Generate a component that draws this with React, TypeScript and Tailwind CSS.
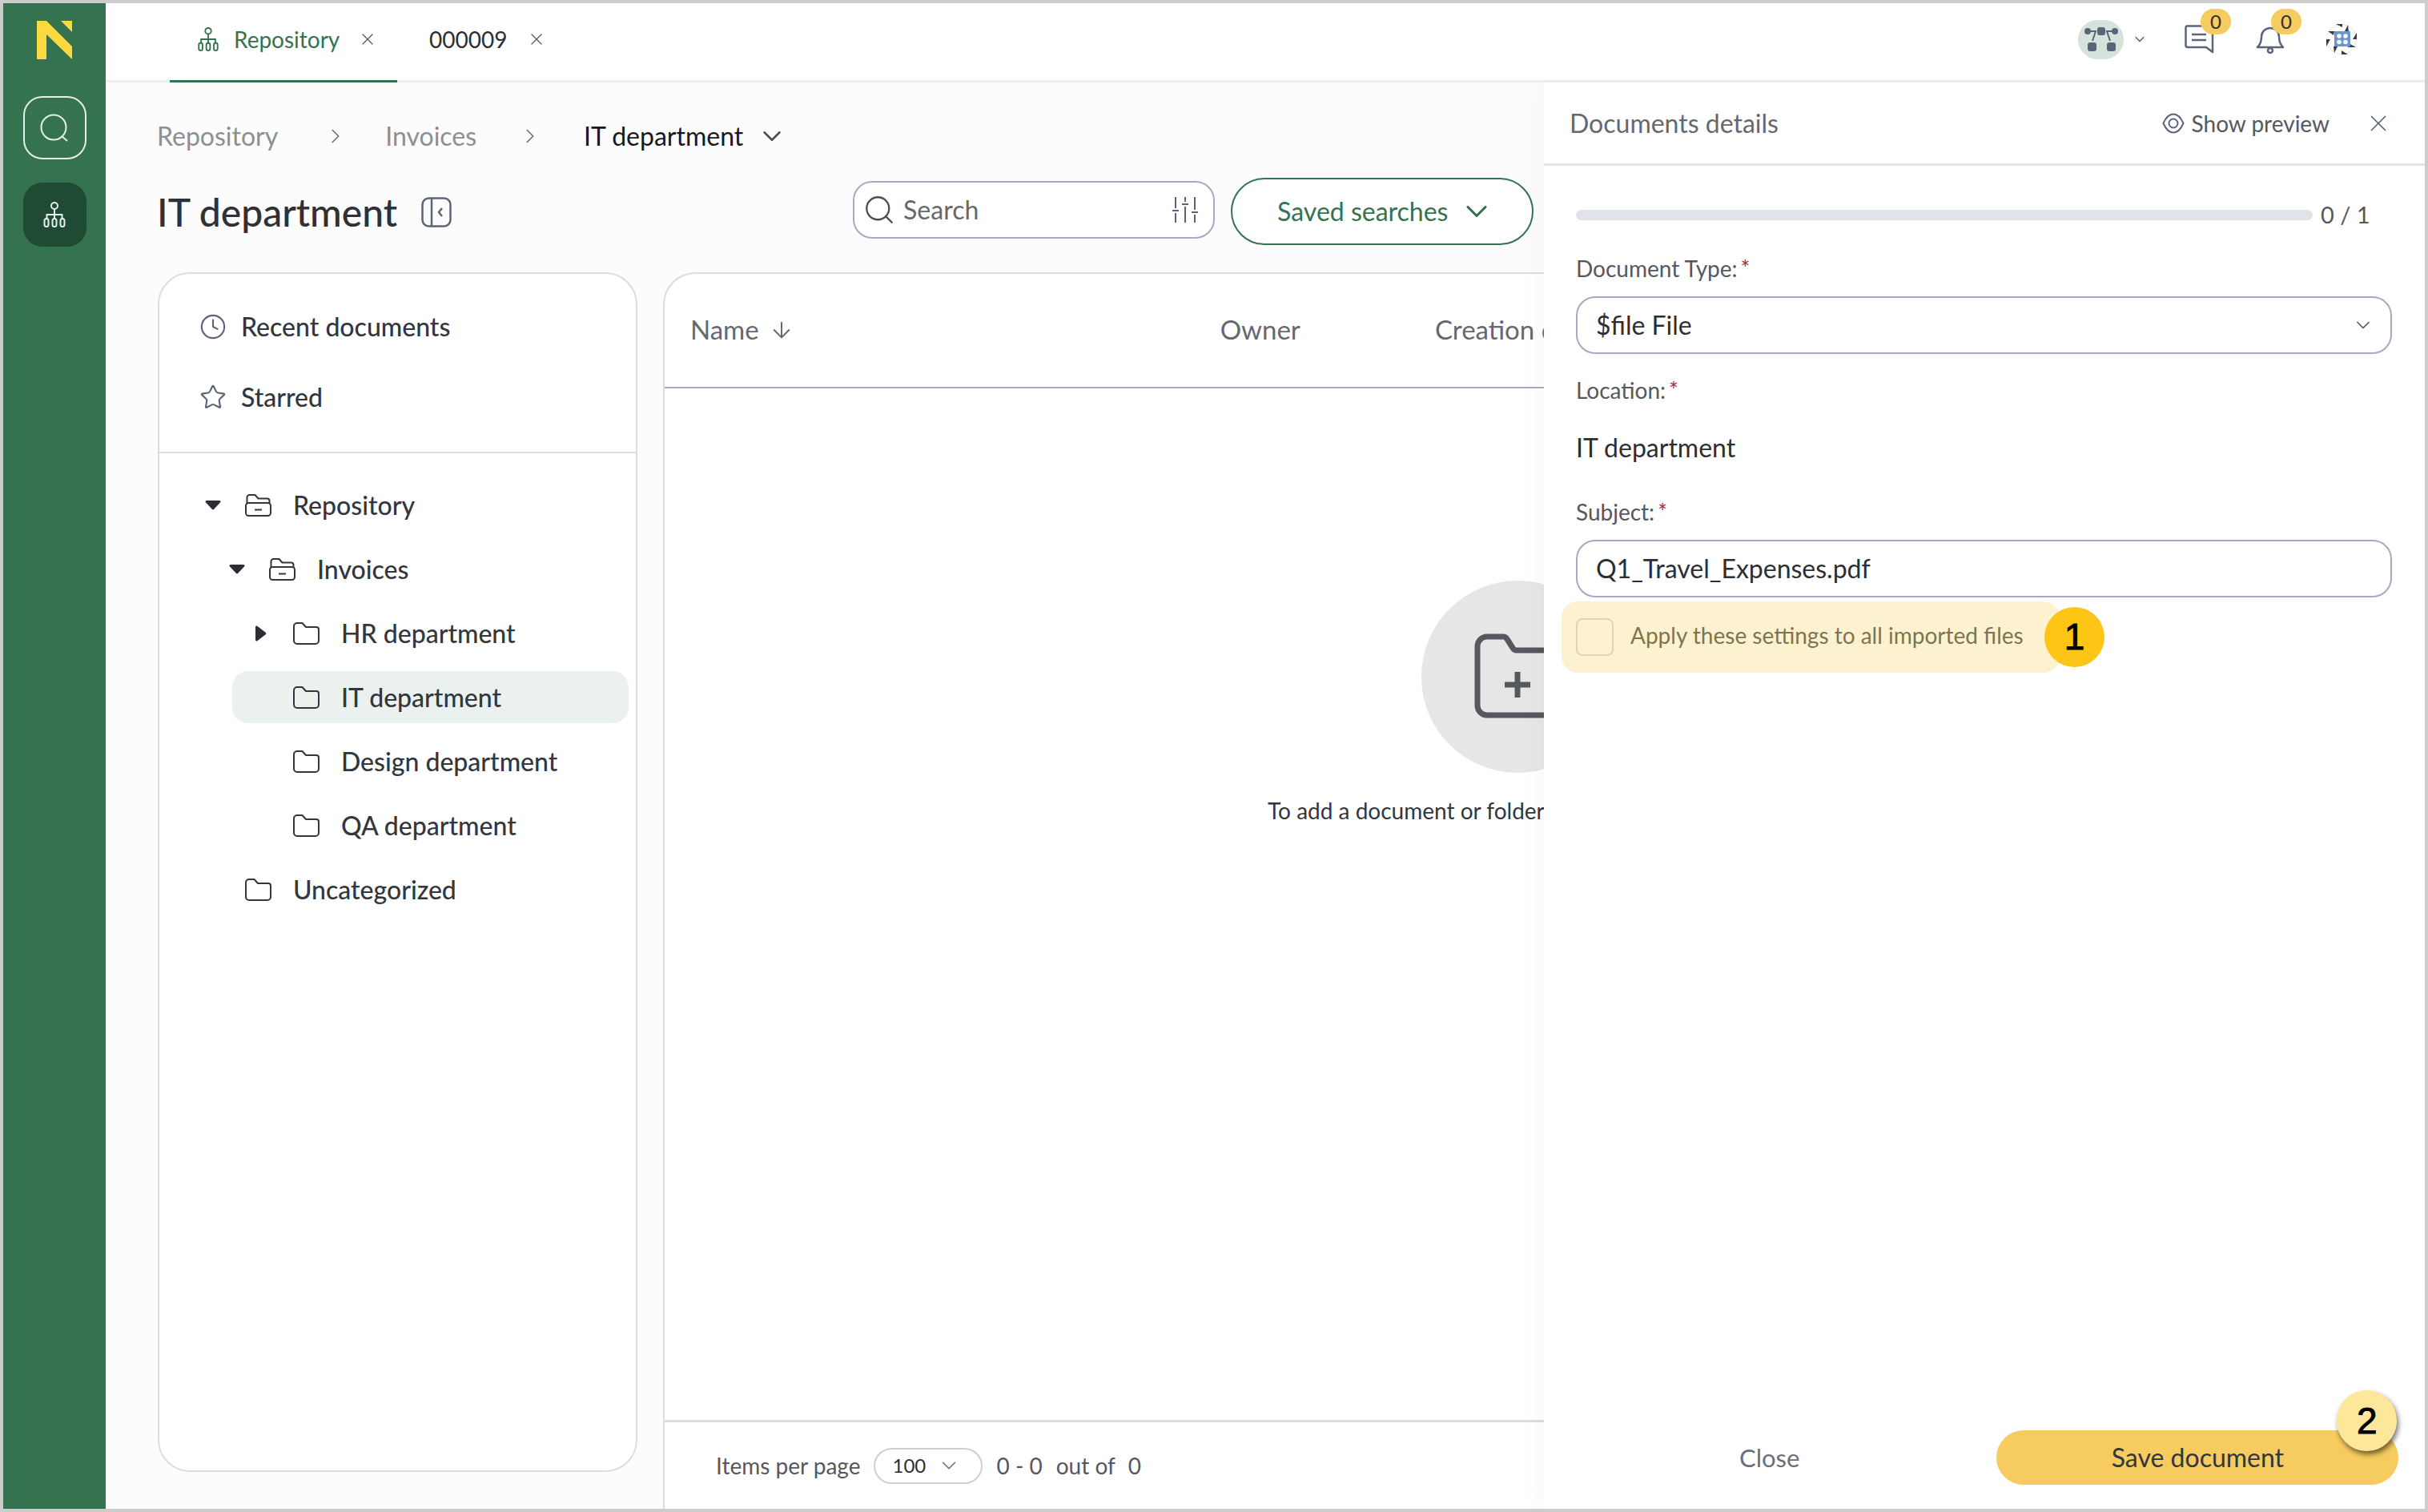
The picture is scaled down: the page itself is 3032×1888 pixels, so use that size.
import React from 'react';
import { ChevronDown, ChevronRight, Clock, Star, X, ArrowDown, Search } from 'lucide-react';

function TreeIcon({ className }: { className?: string }) {
  return (
    <svg viewBox="0 0 28 32" fill="none" stroke="currentColor" strokeWidth="2" className={className}>
      <circle cx="14" cy="5" r="4" />
      <path d="M14 9v7M4.5 21v-5h19v5M14 16v5" />
      <rect x="1.5" y="21" width="5" height="10" rx="2.5" />
      <rect x="11.5" y="21" width="5" height="10" rx="2.5" />
      <rect x="21.5" y="21" width="5" height="10" rx="2.5" />
    </svg>
  );
}

function Folder({ open }: { open?: boolean }) {
  return (
    <svg viewBox="0 0 33 28" fill="none" stroke="#33363d" strokeWidth="2" strokeLinejoin="round" className="h-[28px] w-[33px] shrink-0">
      {open ? (
        <>
          <path d="M2.5 12V4a3 3 0 0 1 3-3h7l4 4.5h11a3 3 0 0 1 3 3V12" />
          <rect x="1" y="11" width="31" height="16" rx="3.5" />
          <path d="M12 19.500h9" />
        </>
      ) : (
        <path d="M1 5a4 4 0 0 1 4-4h6.500l4.500 5h13a3 3 0 0 1 3 3v14a4 4 0 0 1-4 4H5a4 4 0 0 1-4-4z" />
      )}
    </svg>
  );
}

function Caret({ open }: { open: boolean }) {
  return open ? (
    <svg viewBox="0 0 20 12" className="h-[12px] w-[20px] shrink-0" fill="#2c2e33">
      <path d="M2 0h16a1.500 1.500 0 0 1 1 2.600L11 11a1.500 1.500 0 0 1-2 0L1 2.600A1.500 1.500 0 0 1 2 0z" />
    </svg>
  ) : (
    <svg viewBox="0 0 14 20" className="h-[20px] w-[14px] shrink-0" fill="#2c2e33">
      <path d="M0 2a1.500 1.500 0 0 1 2.600-1L13 9a1.500 1.500 0 0 1 0 2L2.600 19A1.500 1.500 0 0 1 0 18z" />
    </svg>
  );
}

const treeRows = [
  { label: 'Repository', caretLeft: 57, folderLeft: 107, open: true, caret: true },
  { label: 'Invoices', caretLeft: 87, folderLeft: 137, open: true, caret: true },
  { label: 'HR department', caretLeft: 120, folderLeft: 167, open: false, caret: true },
  { label: 'IT department', caretLeft: 0, folderLeft: 167, open: false, caret: false, selected: true },
  { label: 'Design department', caretLeft: 0, folderLeft: 167, open: false, caret: false },
  { label: 'QA department', caretLeft: 0, folderLeft: 167, open: false, caret: false },
  { label: 'Uncategorized', caretLeft: 0, folderLeft: 107, open: false, caret: false },
];

function Required({ children }: { children: React.ReactNode }) {
  return (
    <div className="text-[28px] leading-[36px] text-[#55585f]">
      {children}
      <span className="relative ml-[4px] text-[#a8323a]">*</span>
    </div>
  );
}

export default function App() {
  return (
    <div
      className="relative flex h-[1888px] w-[3032px] overflow-hidden border-4 border-[#cccccc] bg-[#fcfcfc] text-[#33363d]"
      style={{ fontFamily: 'Lato, sans-serif' }}
    >
      {/* Green rail */}
      <aside className="flex w-[128px] shrink-0 flex-col items-center bg-[#35724f] pt-[22px]">
        <svg viewBox="0 0 44 48" className="h-[48px] w-[44px]" fill="#fdd83f">
          <path d="M0 0h12l32 32v16L12 17v31H0z" />
          <path d="M30 0h14v14z" />
        </svg>
        <button className="mt-[46px] flex h-[79px] w-[79px] items-center justify-center rounded-[24px] border-2 border-[#e4efe9] text-[#e4efe9]">
          <svg viewBox="0 0 36 36" fill="none" stroke="currentColor" strokeWidth="2" className="h-[36px] w-[36px]">
            <circle cx="17" cy="17" r="15.500" />
            <path d="M27 28l7 6" />
          </svg>
        </button>
        <button className="mt-[29px] flex h-[80px] w-[79px] items-center justify-center rounded-[24px] bg-[#1f4a33] text-[#e4efe9]">
          <TreeIcon className="h-[32px] w-[34px]" />
        </button>
      </aside>

      <div className="flex min-w-0 flex-1 flex-col">
        {/* Top tabs */}
        <header className="flex h-[99px] shrink-0 items-center border-b-[3px] border-[#eeeeee] bg-white pb-[6px] pl-[80px]">
          <div className="relative flex h-full w-[284px] items-center pl-[34px] text-[#35724f]">
            <TreeIcon className="h-[30px] w-[28px]" />
            <span className="ml-[18px] text-[28px]">Repository</span>
            <X className="ml-[23px] h-[24px] w-[24px] text-[#55585f]" strokeWidth={1.300} />
            <div className="absolute -bottom-[9px] left-0 h-[3px] w-full bg-[#35724f]" />
          </div>
          <span className="ml-[40px] text-[28px] text-[#2c2e33]">000009</span>
          <X className="ml-[25px] h-[24px] w-[24px] text-[#55585f]" strokeWidth={1.300} />
          <div className="ml-auto flex items-center pr-[85px]">
            <div className="flex h-[49px] w-[57px] items-center justify-center rounded-full bg-[#d6e2dc]">
              <svg viewBox="0 0 44 32" className="h-[32px] w-[44px]" fill="#5b6478" stroke="#5b6478">
                <circle cx="5" cy="6" r="4" stroke="none" />
                <circle cx="39" cy="6" r="4" stroke="none" />
                <rect x="17" y="1" width="10" height="10" rx="3" stroke="none" />
                <rect x="5" y="20" width="11" height="11" rx="3" stroke="none" />
                <rect x="29" y="20" width="11" height="11" rx="3" stroke="none" />
                <path d="M8 6h7l-4 12M36 6h-7l4 12" fill="none" strokeWidth="2" />
              </svg>
            </div>
            <ChevronDown className="ml-[10px] h-[20px] w-[20px] text-[#55585f]" strokeWidth={1.500} />
            <div className="relative ml-[46px] h-[36px] w-[38px]">
              <svg viewBox="0 0 38 36" fill="none" stroke="#5b6478" strokeWidth="2.500" strokeLinejoin="round" className="h-[36px] w-[38px]">
                <path d="M3 1.500h30a2 2 0 0 1 2 2V34l-8-6H4a2.500 2.500 0 0 1-2.500-2.500V3a2 2 0 0 1 1.500-1.500z" />
                <path d="M9 12h18M9 19h18" />
              </svg>
              <span className="absolute -top-[20px] left-[20px] flex h-[32px] w-[38px] items-center justify-center rounded-full bg-[#f6cb5f] text-[24px] text-[#2c2e33]">
                0
              </span>
            </div>
            <div className="relative ml-[51px] h-[36px] w-[36px]">
              <svg viewBox="0 0 36 36" fill="none" stroke="#5b6478" strokeWidth="2.500" strokeLinejoin="round" className="h-[36px] w-[36px]">
                <path d="M2 28c3-3 5-6 5-13a11 11 0 0 1 22 0c0 7 2 10 5 13z" />
                <circle cx="18" cy="32" r="3" />
              </svg>
              <span className="absolute -top-[20px] left-[19px] flex h-[32px] w-[38px] items-center justify-center rounded-full bg-[#f6cb5f] text-[24px] text-[#2c2e33]">
                0
              </span>
            </div>
            <svg viewBox="0 0 38 38" className="ml-[52px] h-[38px] w-[38px]">
              <circle cx="19" cy="19" r="18.500" fill="#fff" stroke="#d5d5d5" strokeWidth="0.600" />
              <path d="M12 0h8v4zM27 1l1 9-5-1zM38 11v8h-5zM37 29H27l1-5zM27 38h-8v-5zM10 36l-1-8h5zM0 28v-9h5zM2 9h8l-1 5z" fill="#3a3d44" />
              <rect x="10" y="9" width="20" height="19" fill="#6b95cf" />
              <circle cx="16" cy="15" r="2.800" fill="#fff" />
              <circle cx="24" cy="15" r="2.800" fill="#fff" />
              <circle cx="16" cy="22.500" r="2.800" fill="#fff" />
              <circle cx="24" cy="22.500" r="2.800" fill="#fff" />
            </svg>
          </div>
        </header>

        {/* Breadcrumb and title */}
        <div className="flex h-[104px] shrink-0 items-center pl-[64px] pt-[30px] text-[32px] leading-none">
          <span className="text-[#8d8f94]">Repository</span>
          <ChevronRight className="ml-[57px] h-[30px] w-[30px] text-[#6b6e75]" strokeWidth={1.300} />
          <span className="ml-[47px] text-[#8d8f94]">Invoices</span>
          <ChevronRight className="ml-[52px] h-[30px] w-[30px] text-[#6b6e75]" strokeWidth={1.300} />
          <span className="ml-[52px] text-[#17181b]">IT department</span>
          <ChevronDown className="ml-[17px] h-[38px] w-[38px] text-[#4b4e55]" strokeWidth={1.600} />
        </div>
        <div className="flex h-[133px] shrink-0 items-start pl-[64px]">
          <div className="mt-[28px] flex items-center">
            <h1 className="text-[48px] font-medium leading-[60px] text-[#2f3136]">IT department</h1>
            <svg viewBox="0 0 38 38" fill="none" stroke="#5b6478" strokeWidth="2.500" className="ml-[30px] h-[38px] w-[38px]">
              <rect x="1.500" y="1.500" width="35" height="35" rx="8" />
              <path d="M13 2v34M26 14l-4 5 4 5" />
            </svg>
          </div>
          <div className="ml-[501px] mt-[19px] flex h-[72px] w-[452px] items-center rounded-[24px] border-2 border-[#a9a9c4] bg-white pl-[10px] pr-[18px]">
            <Search className="h-[42px] w-[42px] text-[#4b4e55]" strokeWidth={1.300} />
            <span className="ml-[9px] text-[32px] text-[#66686e]">Search</span>
            <svg viewBox="0 0 34 34" fill="none" stroke="#5b6478" strokeWidth="2" className="ml-auto h-[34px] w-[34px]">
              <path d="M5 1v14M5 21v12M17 1v6M17 13v20M29 1v16M29 23v10M1 18h8M13 10h8M25 20h8" />
            </svg>
          </div>
          <button className="ml-[20px] mt-[15px] flex h-[84px] w-[378px] items-center rounded-full border-2 border-[#35724f] bg-white pl-[56px] text-[32px] text-[#35724f]">
            Saved searches
            <ChevronDown className="ml-[14px] h-[44px] w-[44px]" strokeWidth={1.700} />
          </button>
        </div>

        {/* Folders card and table */}
        <div className="flex min-h-0 flex-1 pl-[65px]">
          <nav className="mb-[46px] flex w-[599px] shrink-0 flex-col rounded-[40px] border-2 border-[#dddddf] bg-white">
            <div className="flex h-[224px] shrink-0 flex-col border-b-2 border-[#dddddf] pl-[50px] pt-[22px]">
              <div className="flex h-[88px] items-center text-[32px] font-medium">
                <Clock className="h-[34px] w-[34px] text-[#5b6478]" strokeWidth={1.500} />
                <span className="ml-[18px]">Recent documents</span>
              </div>
              <div className="flex h-[88px] items-center text-[32px] font-medium">
                <Star className="h-[34px] w-[34px] text-[#5b6478]" strokeWidth={1.500} />
                <span className="ml-[18px]">Starred</span>
              </div>
            </div>
            <ul className="pt-[25px]">
              {treeRows.map((row) => (
                <li key={row.label} className="relative flex h-[80px] items-center text-[32px] font-medium">
                  {row.selected && (
                    <div className="absolute left-[91px] top-[7px] h-[65px] w-[495px] rounded-[20px] bg-[#eaf1ee]" />
                  )}
                  {row.caret && (
                    <span className="absolute top-1/2 flex -translate-y-1/2" style={{ left: row.caretLeft }}>
                      <Caret open={row.open} />
                    </span>
                  )}
                  <span className="relative flex items-center" style={{ marginLeft: row.folderLeft }}>
                    <Folder open={row.open} />
                    <span className="ml-[27px] whitespace-nowrap">{row.label}</span>
                  </span>
                </li>
              ))}
            </ul>
          </nav>

          <section className="ml-[32px] flex min-w-0 flex-1 flex-col rounded-tl-[40px] border-l-2 border-t-2 border-[#dddddf] bg-white">
            <div className="flex h-[143px] shrink-0 items-center border-b-2 border-[#a9a9c4] pb-[2px] pl-[32px] text-[33px] text-[#66686e]">
              <span>Name</span>
              <ArrowDown className="ml-[12px] h-[32px] w-[32px]" strokeWidth={1.500} />
              <span className="ml-[532px]">Owner</span>
              <span className="ml-[168px] whitespace-nowrap">Creation date</span>
            </div>
            <div className="flex min-h-0 flex-1 flex-col border-b-[3px] border-[#dddddf] pt-[240px]">
              <div className="ml-[945px] flex h-[240px] w-[240px] shrink-0 items-center justify-center rounded-full bg-[#e6e6e6]">
                <svg viewBox="0 0 108 108" fill="none" stroke="#55585f" strokeWidth="7" strokeLinejoin="round" className="h-[108px] w-[108px]">
                  <path d="M4 16a12 12 0 0 1 12-12h20a6 6 0 0 1 5 3l7 11a6 6 0 0 0 5 3h39a12 12 0 0 1 12 12v57a12 12 0 0 1-12 12H16a12 12 0 0 1-12-12z" />
                  <path d="M54 48v32M38 64h32" />
                </svg>
              </div>
              <p className="ml-[753px] mt-[26px] whitespace-nowrap text-[28px] text-[#33363d]">To add a document or folder, drag it here</p>
            </div>
            <div className="flex h-[108px] shrink-0 items-center pl-[64px] text-[28px] text-[#55585f]">
              <span>Items per page</span>
              <div className="ml-[16px] flex h-[45px] w-[136px] shrink-0 items-center rounded-full border-2 border-[#cfcfcf] pl-[22px] text-[#2c2e33]">
                <span className="text-[24px]">100</span>
                <ChevronDown className="ml-[14px] h-[30px] w-[30px] text-[#6b6e75]" strokeWidth={1.300} />
              </div>
              <span className="ml-[18px]">0 - 0</span>
              <span className="ml-[17px]">out of</span>
              <span className="ml-[16px]">0</span>
            </div>
          </section>
        </div>
      </div>

      {/* Document details drawer */}
      <div className="absolute bottom-0 right-0 top-[99px] flex w-[1100px] flex-col bg-white shadow-[-12px_0_24px_rgba(0,0,0,0.02)]">
        <div className="flex h-[104px] shrink-0 items-center border-b-[3px] border-[#e4e4e4] pl-[32px] pr-[41px]">
          <span className="text-[32px] text-[#66686e]">Documents details</span>
          <svg viewBox="0 0 28 26" fill="none" stroke="#5b6478" strokeWidth="2" className="ml-auto h-[26px] w-[28px]">
            <path d="M1.500 13C5 5 9 1.500 14 1.500S23 5 26.500 13C23 21 19 24.500 14 24.500S5 21 1.500 13z" />
            <circle cx="14" cy="13" r="5.500" />
          </svg>
          <span className="ml-[9px] text-[28px] text-[#55585f]">Show preview</span>
          <X className="ml-[44px] h-[34px] w-[34px] text-[#5b6478]" strokeWidth={1.200} />
        </div>
        <div className="flex flex-1 flex-col pl-[40px] pr-[41px]">
          <div className="mt-[43px] flex items-center">
            <div className="h-[13px] w-[920px] rounded-full bg-[#e0e4e8]" />
            <span className="ml-[10px] text-[29px] leading-[36px] text-[#55585f]">0 / 1</span>
          </div>
          <div className="mt-[31px]">
            <Required>Document Type:</Required>
          </div>
          <div className="mt-[17px] flex h-[72px] items-center rounded-[24px] border-2 border-[#a9a9c4] pl-[23px] pr-[20px] text-[32px] text-[#2c2e33]">
            $file File
            <ChevronDown className="ml-auto h-[28px] w-[28px] text-[#55585f]" strokeWidth={1.500} />
          </div>
          <div className="mt-[27px]">
            <Required>Location:</Required>
          </div>
          <div className="mt-[34px] text-[32px] leading-[40px] text-[#2c2e33]">IT department</div>
          <div className="mt-[42px]">
            <Required>Subject:</Required>
          </div>
          <div className="mt-[17px] flex h-[72px] items-center rounded-[24px] border-2 border-[#a9a9c4] pl-[23px] text-[32px] text-[#2c2e33]">
            Q1_Travel_Expenses.pdf
          </div>
          <div className="relative -ml-[18px] mt-[5px] flex h-[89px] w-[622px] items-center rounded-[20px] bg-[#fdf2d0] pl-[18px]">
            <div className="h-[47px] w-[47px] rounded-[8px] border-2 border-[#ddd6b6]" />
            <span className="mb-[6px] ml-[21px] text-[28px] text-[#7d7550]">Apply these settings to all imported files</span>
            <div
              className="absolute -right-[56px] top-[7px] flex h-[75px] w-[75px] items-center justify-center rounded-full bg-[#fdc515] text-[46px] text-black [-webkit-text-stroke:1px_black]"
              style={{ fontFamily: '"Liberation Sans", sans-serif' }}
            >
              1
            </div>
          </div>
          <div className="mb-[30px] mt-auto flex h-[68px] items-center pl-[204px]">
            <span className="text-[31px] text-[#6b6e80]">Close</span>
            <button className="relative ml-[246px] flex h-[68px] w-[502px] shrink-0 items-center justify-center rounded-full bg-[#f6cb5f] text-[32px] text-[#33363d]">
              Save document
              <span
                className="absolute -top-[50px] right-[2px] flex h-[76px] w-[75px] items-center justify-center rounded-full bg-[#fde79a] text-[46px] text-black shadow-[2px_4px_6px_rgba(0,0,0,0.55)] [-webkit-text-stroke:1px_black]"
                style={{ fontFamily: '"Liberation Sans", sans-serif' }}
              >
                2
              </span>
            </button>
          </div>
        </div>
      </div>
    </div>
  );
}
